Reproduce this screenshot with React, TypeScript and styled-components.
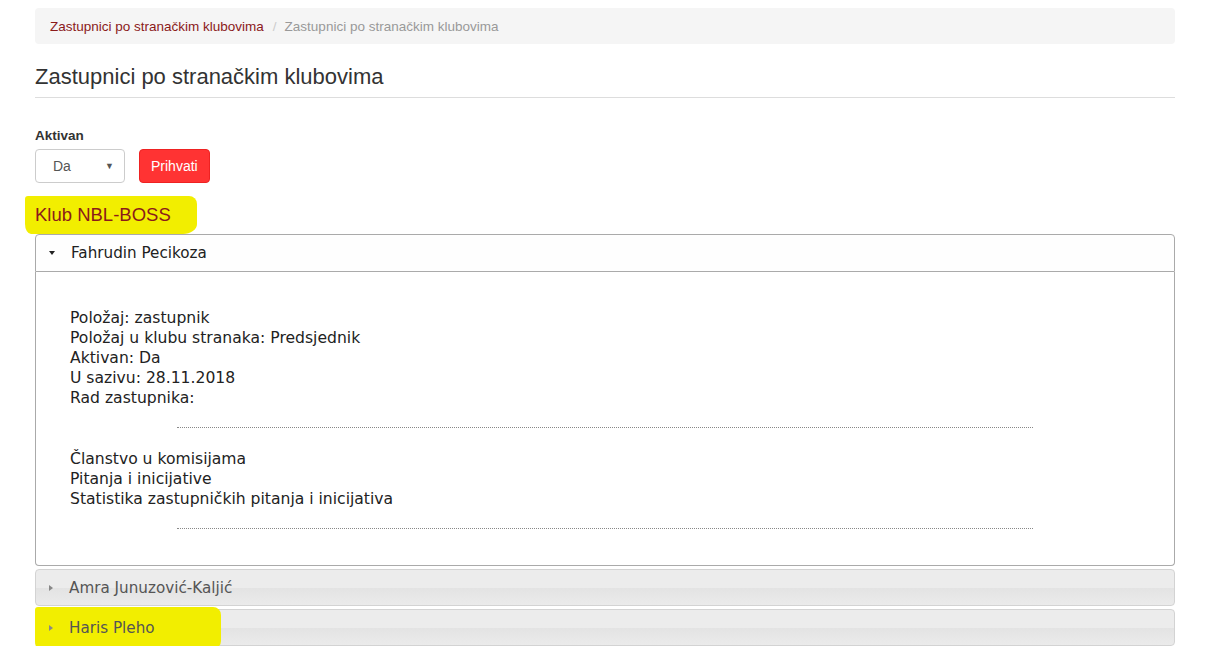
import React from "react";
import styled, { createGlobalStyle } from "styled-components";

const GlobalStyle = createGlobalStyle`
  html, body { margin: 0; padding: 0; background: #fff; }
  body {
    font-family: "Liberation Sans", Arial, sans-serif;
    font-size: 14px;
    color: #333;
  }
  * { box-sizing: border-box; }
`;

const Page = styled.div`
  width: 1140px;
  margin: 0 35px;
  padding-top: 8px;
`;

const Breadcrumb = styled.ol`
  list-style: none;
  margin: 0;
  padding: 0 15px;
  height: 36px;
  display: flex;
  align-items: center;
  background: #f5f5f5;
  border-radius: 4px;
  font-size: 13.5px;
`;

const Crumb = styled.li<{ $active?: boolean }>`
  color: ${(p) => (p.$active ? "#999" : "#8b1a1a")};
  &:not(:first-child)::before {
    content: "/";
    color: #ccc;
    padding: 0 8px 0 9px;
  }
`;

const PageTitle = styled.h2`
  margin: 20px 0 0;
  padding-bottom: 7px;
  font-size: 22px;
  font-weight: 400;
  color: #333;
  border-bottom: 1px solid #ddd;
`;

const FilterForm = styled.form`
  margin-top: 30px;
`;

const Label = styled.label`
  display: block;
  font-weight: 700;
  font-size: 13.5px;
  margin-bottom: 6px;
`;

const FilterRow = styled.div`
  display: flex;
  gap: 14px;
`;

const SelectBox = styled.div`
  width: 90px;
  height: 34px;
  border: 1px solid #ccc;
  border-radius: 4px;
  display: flex;
  align-items: center;
  justify-content: space-between;
  padding: 0 10px 0 17px;
  color: #555;
  font-size: 14px;
  background: #fff;
`;

const Caret = styled.span`
  font-size: 9px;
  color: #555;
`;

const SubmitButton = styled.button`
  height: 34px;
  padding: 0 11px;
  border: 1px solid #e22;
  border-radius: 4px;
  background: #ff3333;
  color: #fff;
  font-family: inherit;
  font-size: 14px;
`;

const ClubTitle = styled.h3`
  position: relative;
  margin: 13px 0 0;
  height: 38px;
  display: flex;
  align-items: center;
  font-size: 18.5px;
  font-weight: 400;
  color: #8b1a1a;
`;

const Raised = styled.span`
  position: relative;
  z-index: 1;
`;

const Highlight = styled.span<{ $w: number; $h: number; $x: number; $y: number }>`
  position: absolute;
  left: ${(p) => p.$x}px;
  top: ${(p) => p.$y}px;
  width: ${(p) => p.$w}px;
  height: ${(p) => p.$h}px;
  background: #f2ee00;
  border-radius: 3px 8px 14px 6px / 3px 8px 10px 10px;
  pointer-events: none;
`;

const Accordion = styled.div`
  display: flex;
  flex-direction: column;
  gap: 3px;
  font-family: "DejaVu Sans", Verdana, sans-serif;
`;

const Section = styled.div``;

const Header = styled.div<{ $open?: boolean }>`
  position: relative;
  height: ${(p) => (p.$open ? 38 : 37)}px;
  display: flex;
  align-items: center;
  padding-left: 13px;
  font-size: 15.2px;
  color: ${(p) => (p.$open ? "#212121" : "#555")};
  border: 1px solid ${(p) => (p.$open ? "#aaa" : "#d3d3d3")};
  border-radius: ${(p) => (p.$open ? "4px 4px 0 0" : "4px")};
  background: ${(p) =>
    p.$open
      ? "#fefefe"
      : "linear-gradient(to bottom, #ececec 0%, #ececec 50%, #e3e3e3 52%, #ebebeb 100%)"};
`;

const Arrow = styled.span<{ $open?: boolean }>`
  position: relative;
  z-index: 1;
  width: 0;
  height: 0;
  margin-right: 16px;
  ${(p) =>
    p.$open
      ? `border-left: 3.5px solid transparent; border-right: 3.5px solid transparent; border-top: 4px solid #222;`
      : `border-top: 3.5px solid transparent; border-bottom: 3.5px solid transparent; border-left: 4px solid #888;`}
`;

const Content = styled.div`
  border: 1px solid #aaa;
  border-top: 0;
  border-radius: 0 0 4px 4px;
  padding: 36px 34px 36px;
  font-size: 15.6px;
  line-height: 20px;
  color: #222;
  background: #fff;
`;

const Line = styled.div``;

const Divider = styled.hr<{ $after?: number }>`
  width: 80%;
  margin: 19px auto ${(p) => p.$after ?? 21}px;
  border: 0;
  border-top: 1px dotted #888;
`;

const details = [
  "Položaj: zastupnik",
  "Položaj u klubu stranaka: Predsjednik",
  "Aktivan: Da",
  "U sazivu: 28.11.2018",
  "Rad zastupnika:",
];

const links = [
  "Članstvo u komisijama",
  "Pitanja i inicijative",
  "Statistika zastupničkih pitanja i inicijativa",
];

export default function App() {
  return (
    <>
      <GlobalStyle />
      <Page>
        <Breadcrumb>
          <Crumb>Zastupnici po stranačkim klubovima</Crumb>
          <Crumb $active>Zastupnici po stranačkim klubovima</Crumb>
        </Breadcrumb>
        <PageTitle>Zastupnici po stranačkim klubovima</PageTitle>

        <FilterForm>
          <Label>Aktivan</Label>
          <FilterRow>
            <SelectBox>
              Da <Caret>▼</Caret>
            </SelectBox>
            <SubmitButton type="button">Prihvati</SubmitButton>
          </FilterRow>
        </FilterForm>

        <ClubTitle>
          <Highlight $x={-10} $y={0} $w={172} $h={38} />
          <Raised>Klub NBL-BOSS</Raised>
        </ClubTitle>

        <Accordion>
          <Section>
            <Header $open>
              <Arrow $open />
              <Raised>Fahrudin Pecikoza</Raised>
            </Header>
            <Content>
              {details.map((d) => (
                <Line key={d}>{d}</Line>
              ))}
              <Divider />
              {links.map((l) => (
                <Line key={l}>{l}</Line>
              ))}
              <Divider $after={0} />
            </Content>
          </Section>
          <Section>
            <Header>
              <Arrow />
              <Raised>Amra Junuzović-Kaljić</Raised>
            </Header>
          </Section>
          <Section>
            <Header>
              <Highlight $x={-1} $y={-3} $w={186} $h={44} />
              <Arrow />
              <Raised>Haris Pleho</Raised>
            </Header>
          </Section>
        </Accordion>
      </Page>
    </>
  );
}
